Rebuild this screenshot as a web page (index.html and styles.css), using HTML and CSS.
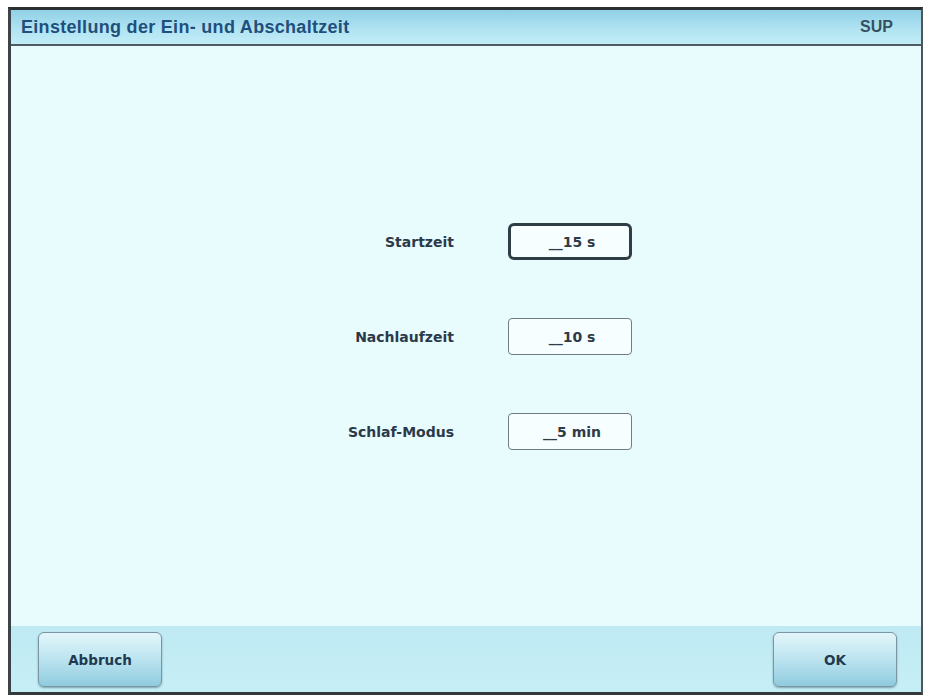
FILE: index.html
```html
<!DOCTYPE html>
<html lang="de">
<head>
<meta charset="utf-8">
<title>Einstellung der Ein- und Abschaltzeit</title>
<link rel="stylesheet" href="styles.css">
</head>
<body>
<div class="screen">
  <div class="titlebar">
    <span class="title">Einstellung der Ein- und Abschaltzeit</span>
    <span class="user">SUP</span>
  </div>
  <div class="content">
    <div class="form">
      <div class="label">Startzeit</div>
      <div class="field active">__15 s</div>
      <div class="label">Nachlaufzeit</div>
      <div class="field">__10 s</div>
      <div class="label">Schlaf-Modus</div>
      <div class="field">__5 min</div>
    </div>
  </div>
  <div class="footer">
    <button class="btn">Abbruch</button>
    <button class="btn">OK</button>
  </div>
</div>
</body>
</html>
```

FILE: styles.css
```css
html, body {
  margin: 0;
  padding: 0;
  background: #ffffff;
}

body {
  font-family: "DejaVu Sans", Verdana, sans-serif;
}

.screen {
  box-sizing: border-box;
  margin: 7px 6px 0 8px;
  height: 688px;
  border-top: 3px solid #2c2f31;
  border-left: 3px solid #3d4346;
  border-right: 2px solid #4f5659;
  border-bottom: 3px solid #34393b;
  display: flex;
  flex-direction: column;
}

.titlebar {
  height: 34px;
  border-bottom: 2px solid #4e5b61;
  background: linear-gradient(#8fd0e6, #b0e3f2 55%, #c2edf7);
  display: flex;
  align-items: center;
  justify-content: space-between;
  padding: 0 28px 0 10px;
}

.title {
  font-family: "Liberation Sans", Arial, sans-serif;
  font-weight: bold;
  font-size: 18px;
  color: #1f4f7c;
  letter-spacing: 0.3px;
}

.user {
  font-family: "Liberation Sans", Arial, sans-serif;
  font-weight: bold;
  font-size: 16px;
  color: #38505e;
}

.content {
  flex: 1;
  background: #e8fbfd;
  padding-top: 177px;
}

.form {
  display: grid;
  grid-template-columns: 170px 124px;
  grid-auto-rows: 37px;
  column-gap: 54px;
  row-gap: 58px;
  padding-left: 273px;
  align-items: center;
}

.label {
  text-align: right;
  font-weight: bold;
  font-size: 14px;
  color: #2b3a4a;
}

.field {
  box-sizing: border-box;
  height: 37px;
  border: 1.5px solid #6f7c83;
  border-radius: 4px;
  background: #f6feff;
  display: flex;
  align-items: center;
  justify-content: center;
  font-weight: bold;
  font-size: 14px;
  color: #2e3b46;
  padding-left: 4px;
}

.field.active {
  border: 3px solid #2e3d46;
  border-radius: 6px;
}

.footer {
  height: 66px;
  background: linear-gradient(#bfeaf3, #c6eef6);
  display: flex;
  justify-content: space-between;
  align-items: flex-start;
  padding: 6px 24px 0 27px;
  box-sizing: border-box;
}

.btn {
  width: 124px;
  height: 55px;
  border: 1px solid #7996a4;
  border-radius: 6px;
  background: linear-gradient(#e2f6fa, #c0e6f1 45%, #8fcbdf);
  box-shadow: 0 1px 2px rgba(40, 70, 85, 0.45);
  font-family: "DejaVu Sans", Verdana, sans-serif;
  font-weight: bold;
  font-size: 13.5px;
  color: #1f3a50;
  padding: 0;
}
```
